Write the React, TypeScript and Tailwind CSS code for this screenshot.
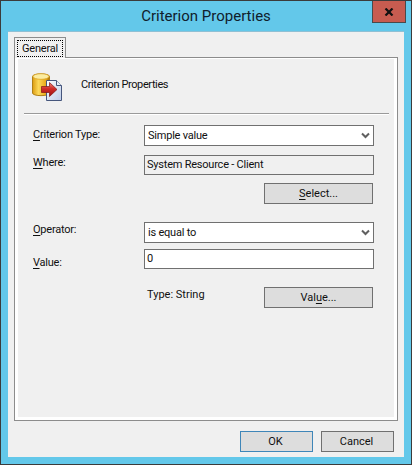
const FONT = "font-['Roboto','Liberation_Sans',sans-serif]";

function Chevron() {
  return (
    <svg width="9" height="7" viewBox="0 0 9 7" className="shrink-0" aria-hidden="true">
      <path d="M1 1.5 L4.5 5 L8 1.5" fill="none" stroke="#606060" strokeWidth="2" />
    </svg>
  );
}

function DbIcon() {
  return (
    <svg width="30" height="28" viewBox="0 0 30 28" aria-hidden="true">
      <defs>
        <linearGradient id="cyl" x1="0" x2="1" y1="0" y2="0">
          <stop offset="0" stopColor="#dc9c10" />
          <stop offset="0.35" stopColor="#fcd85a" />
          <stop offset="0.8" stopColor="#e8a818" />
          <stop offset="1" stopColor="#a87008" />
        </linearGradient>
        <linearGradient id="page" x1="0" x2="1" y1="0" y2="1">
          <stop offset="0" stopColor="#ffffff" />
          <stop offset="1" stopColor="#bccce8" />
        </linearGradient>
        <linearGradient id="arrow" x1="0" x2="0" y1="0" y2="1">
          <stop offset="0" stopColor="#f08878" />
          <stop offset="0.45" stopColor="#d02a28" />
          <stop offset="1" stopColor="#9c1010" />
        </linearGradient>
      </defs>
      <path d="M0.5 3.5 C0.5 0 17.5 0 17.5 3.5 V20 C17.5 23.5 0.5 23.5 0.5 20 Z" fill="url(#cyl)" stroke="#b08018" />
      <ellipse cx="9" cy="3.5" rx="8" ry="2.8" fill="#fbeca0" stroke="#d8a020" strokeWidth="0.7" />
      <path d="M14.5 7.5 H24.5 L29.5 12.5 V27.5 H14.5 Z" fill="url(#page)" stroke="#46567c" />
      <path d="M24.5 7.5 V12.5 H29.5" fill="#e8eef8" stroke="#46567c" />
      <path d="M9.5 13.5 H17.5 V9.5 L25 16.5 L17.5 23.5 V19.5 H9.5 Z" fill="url(#arrow)" stroke="#801414" strokeWidth="0.7" />
    </svg>
  );
}

function Hotkey({ children }: { children: string }) {
  return <span className="underline underline-offset-2">{children}</span>;
}

function Combo({ text }: { text: string }) {
  return (
    <div className="h-[21px] w-[230px] flex items-center justify-between border border-[#707070] bg-white pl-[3px] pr-[3px]">
      <span>{text}</span>
      <Chevron />
    </div>
  );
}

function Btn({ children, className = "" }: { children: React.ReactNode; className?: string }) {
  return (
    <button type="button" className={`h-[21px] flex items-center justify-center tracking-normal bg-[#dddddd] border border-[#707070] ${className}`}>
      <span>{children}</span>
    </button>
  );
}

export default function App() {
  return (
    <div className={`relative w-[412px] h-[465px] flex flex-col overflow-hidden border border-[#3b3b3b] bg-[#63c8ea] text-[11px] leading-[14px] tracking-[-0.22px] text-[#101010] ${FONT}`}>
      <div className="h-[30px] shrink-0 flex items-center justify-center text-[15px] tracking-normal text-[#10202c]">Criterion Properties</div>
      <button type="button" aria-label="Close" className="absolute top-[-1px] right-[5px] w-[34px] h-[23px] flex items-center justify-center bg-[#c75c50] border border-[#4a4a4a]">
        <svg width="10" height="8" viewBox="0 0 10 8" aria-hidden="true">
          <path d="M1.5 0.5 L8.5 7.5 M8.5 0.5 L1.5 7.5" stroke="#111" strokeWidth="2.2" />
        </svg>
      </button>

      <div className="flex-1 min-h-0 mx-[7px] mb-[7px] flex flex-col bg-[#f0f0f0] border-t border-[#8fc0d4]">
        <div className="pl-[6px] pt-[5px] relative z-10 flex">
          <div className="w-[52px] h-[21px] -mb-px border border-b-0 border-[#8c8c8c] bg-[#f0f0f0] pt-[2px] px-[2px] pb-[1px]">
            <div className="h-full flex items-center justify-center border border-dotted border-black">General</div>
          </div>
        </div>

        <div className="mx-[6px] h-[364px] shrink-0 border border-[#8c8c8c] bg-white pt-px px-[3px] pb-[3px]">
          <div className="h-full bg-[#f0f0f0] px-[6px] flex flex-col">
            <div className="h-[54px] shrink-0 flex pt-[14px] pl-[8px]">
              <DbIcon />
              <div className="ml-[19px] mt-[5px] tracking-[-0.4px]">Criterion Properties</div>
            </div>
            <div className="h-[2px] w-[365px] shrink-0 bg-white border-t border-[#9a9a9a]" />

            <div className="pl-[9px] pt-[10px] flex flex-col">
              <div className="flex">
                <div className="w-[111px] pt-[3px]"><Hotkey>C</Hotkey>riterion Type:</div>
                <Combo text="Simple value" />
              </div>
              <div className="flex mt-[9px]">
                <div className="w-[111px] pt-[1px]"><Hotkey>W</Hotkey>here:</div>
                <div className="h-[20px] w-[230px] flex items-center border border-[#707070] pl-[2px]">System Resource - Client</div>
              </div>
              <div className="flex justify-end mt-[8px] w-[341px] pr-[1px]">
                <Btn className="w-[109px]"><Hotkey>S</Hotkey>elect...</Btn>
              </div>
              <div className="flex mt-[18px]">
                <div className="w-[111px] pt-[1px]"><Hotkey>O</Hotkey>perator:</div>
                <Combo text="is equal to" />
              </div>
              <div className="flex mt-[6px]">
                <div className="w-[111px] pt-[7px]"><Hotkey>V</Hotkey>alue:</div>
                <div className="h-[20px] w-[230px] flex items-center border border-[#707070] bg-white pl-[2px]">0</div>
              </div>
              <div className="flex mt-[17px] w-[341px]">
                <div className="pl-[114px] w-[231px] pt-[1px] tracking-normal">Type: String</div>
                <Btn className="w-[109px]">Val<Hotkey>u</Hotkey>e...</Btn>
              </div>
            </div>
          </div>
        </div>

        <div className="flex justify-end gap-[8px] pt-[10px] pr-[10px]">
          <Btn className="w-[73px] pr-[2px] !border-[#3f86b8]">OK</Btn>
          <Btn className="w-[73px] pr-[2px]">Cancel</Btn>
        </div>
      </div>
    </div>
  );
}
